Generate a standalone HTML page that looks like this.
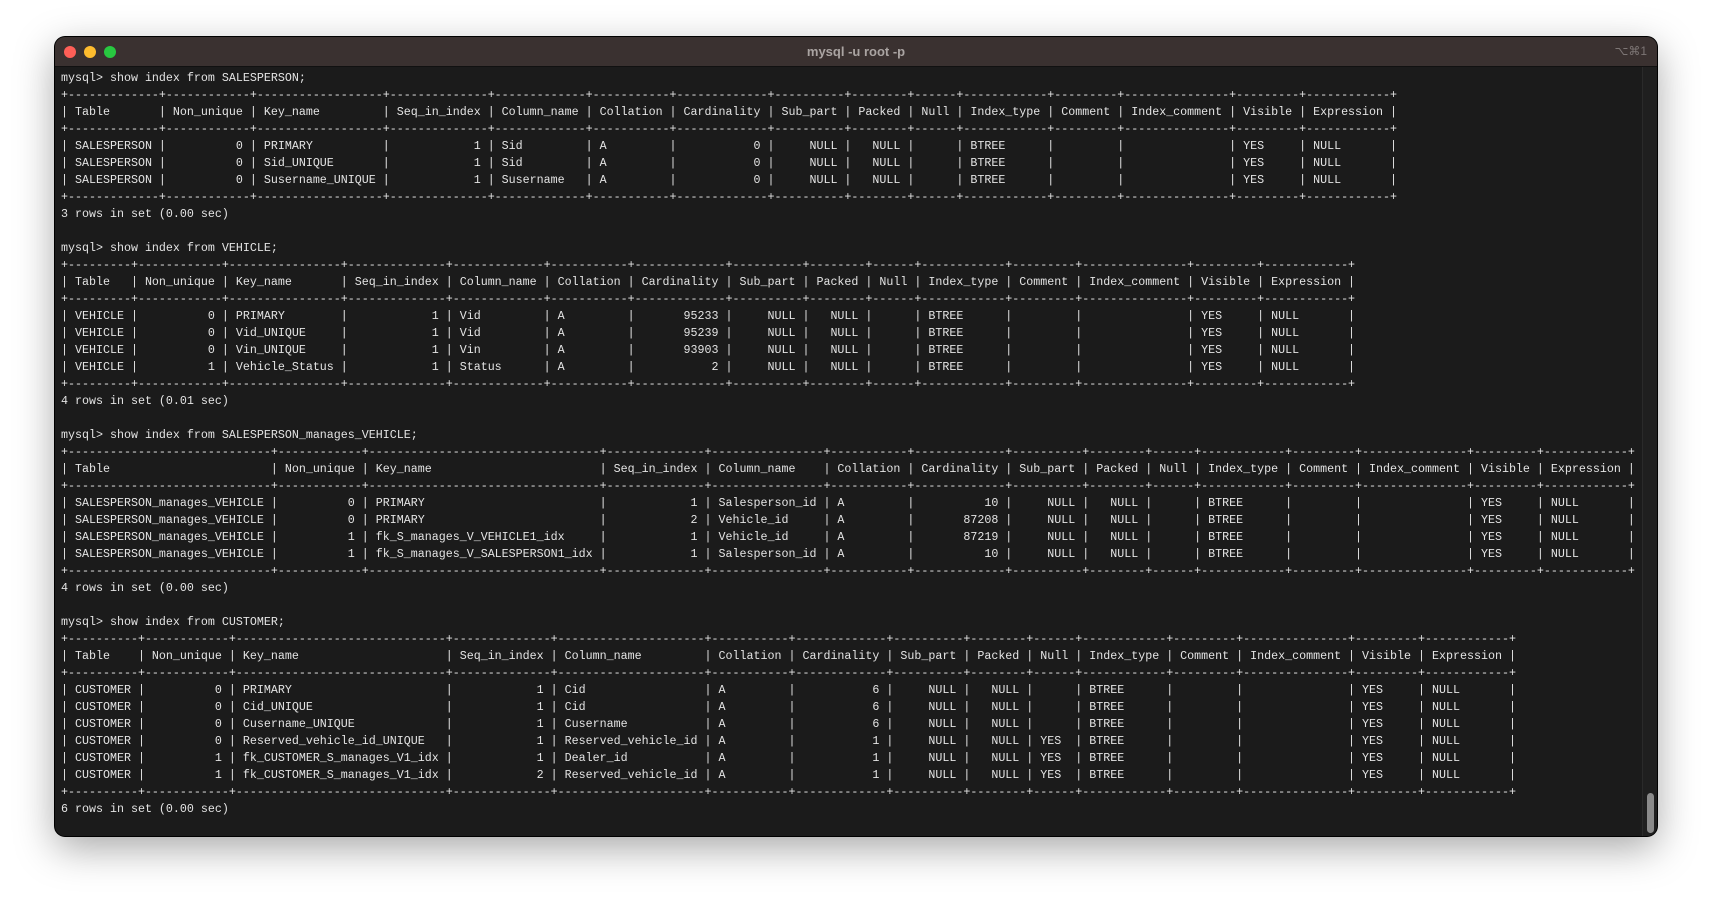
<!DOCTYPE html>
<html><head><meta charset="utf-8">
<style>
html,body{margin:0;padding:0;width:1712px;height:910px;background:#fff;overflow:hidden}
.win{position:absolute;left:55px;top:37px;width:1602px;height:799px;border-radius:10px;background:#1b1b1b;box-shadow:0 12px 40px rgba(0,0,0,.35),0 0 0 1px #000;overflow:hidden}
.tb{height:29px;background:#3a3130;position:relative;border-bottom:1px solid #111}
.dot{position:absolute;top:9px;width:12px;height:12px;border-radius:50%}
.title{position:absolute;left:0;right:0;top:7px;text-align:center;font:bold 13px "Liberation Sans",sans-serif;color:#aaa4a2}
.kb{position:absolute;right:10px;top:7px;font:12px "Liberation Sans","DejaVu Sans",sans-serif;color:#7d7675}
pre{margin:0;position:absolute;left:6px;top:33px;font:11.67px/17px "Liberation Mono",monospace;color:#e4e4e4;white-space:pre}
.sb{position:absolute;right:3px;top:756px;width:7px;height:40px;border-radius:4px;background:#8a8a8a}
.sbt{position:absolute;right:0;top:30px;width:14px;bottom:0;background:#1f1f1f;border-left:1px solid #2a2a2a}
</style></head><body>
<div class="win">
<div class="tb">
<div class="dot" style="left:9px;background:#fe5f57"></div>
<div class="dot" style="left:29px;background:#febc2e"></div>
<div class="dot" style="left:49px;background:#28c840"></div>
<div class="title">mysql -u root -p</div>
<div class="kb">⌥⌘1</div>
</div>
<div class="sbt"></div><div class="sb"></div>
<pre>mysql&gt; show index from SALESPERSON;
+-------------+------------+------------------+--------------+-------------+-----------+-------------+----------+--------+------+------------+---------+---------------+---------+------------+
| Table       | Non_unique | Key_name         | Seq_in_index | Column_name | Collation | Cardinality | Sub_part | Packed | Null | Index_type | Comment | Index_comment | Visible | Expression |
+-------------+------------+------------------+--------------+-------------+-----------+-------------+----------+--------+------+------------+---------+---------------+---------+------------+
| SALESPERSON |          0 | PRIMARY          |            1 | Sid         | A         |           0 |     NULL |   NULL |      | BTREE      |         |               | YES     | NULL       |
| SALESPERSON |          0 | Sid_UNIQUE       |            1 | Sid         | A         |           0 |     NULL |   NULL |      | BTREE      |         |               | YES     | NULL       |
| SALESPERSON |          0 | Susername_UNIQUE |            1 | Susername   | A         |           0 |     NULL |   NULL |      | BTREE      |         |               | YES     | NULL       |
+-------------+------------+------------------+--------------+-------------+-----------+-------------+----------+--------+------+------------+---------+---------------+---------+------------+
3 rows in set (0.00 sec)

mysql&gt; show index from VEHICLE;
+---------+------------+----------------+--------------+-------------+-----------+-------------+----------+--------+------+------------+---------+---------------+---------+------------+
| Table   | Non_unique | Key_name       | Seq_in_index | Column_name | Collation | Cardinality | Sub_part | Packed | Null | Index_type | Comment | Index_comment | Visible | Expression |
+---------+------------+----------------+--------------+-------------+-----------+-------------+----------+--------+------+------------+---------+---------------+---------+------------+
| VEHICLE |          0 | PRIMARY        |            1 | Vid         | A         |       95233 |     NULL |   NULL |      | BTREE      |         |               | YES     | NULL       |
| VEHICLE |          0 | Vid_UNIQUE     |            1 | Vid         | A         |       95239 |     NULL |   NULL |      | BTREE      |         |               | YES     | NULL       |
| VEHICLE |          0 | Vin_UNIQUE     |            1 | Vin         | A         |       93903 |     NULL |   NULL |      | BTREE      |         |               | YES     | NULL       |
| VEHICLE |          1 | Vehicle_Status |            1 | Status      | A         |           2 |     NULL |   NULL |      | BTREE      |         |               | YES     | NULL       |
+---------+------------+----------------+--------------+-------------+-----------+-------------+----------+--------+------+------------+---------+---------------+---------+------------+
4 rows in set (0.01 sec)

mysql&gt; show index from SALESPERSON_manages_VEHICLE;
+-----------------------------+------------+---------------------------------+--------------+----------------+-----------+-------------+----------+--------+------+------------+---------+---------------+---------+------------+
| Table                       | Non_unique | Key_name                        | Seq_in_index | Column_name    | Collation | Cardinality | Sub_part | Packed | Null | Index_type | Comment | Index_comment | Visible | Expression |
+-----------------------------+------------+---------------------------------+--------------+----------------+-----------+-------------+----------+--------+------+------------+---------+---------------+---------+------------+
| SALESPERSON_manages_VEHICLE |          0 | PRIMARY                         |            1 | Salesperson_id | A         |          10 |     NULL |   NULL |      | BTREE      |         |               | YES     | NULL       |
| SALESPERSON_manages_VEHICLE |          0 | PRIMARY                         |            2 | Vehicle_id     | A         |       87208 |     NULL |   NULL |      | BTREE      |         |               | YES     | NULL       |
| SALESPERSON_manages_VEHICLE |          1 | fk_S_manages_V_VEHICLE1_idx     |            1 | Vehicle_id     | A         |       87219 |     NULL |   NULL |      | BTREE      |         |               | YES     | NULL       |
| SALESPERSON_manages_VEHICLE |          1 | fk_S_manages_V_SALESPERSON1_idx |            1 | Salesperson_id | A         |          10 |     NULL |   NULL |      | BTREE      |         |               | YES     | NULL       |
+-----------------------------+------------+---------------------------------+--------------+----------------+-----------+-------------+----------+--------+------+------------+---------+---------------+---------+------------+
4 rows in set (0.00 sec)

mysql&gt; show index from CUSTOMER;
+----------+------------+------------------------------+--------------+---------------------+-----------+-------------+----------+--------+------+------------+---------+---------------+---------+------------+
| Table    | Non_unique | Key_name                     | Seq_in_index | Column_name         | Collation | Cardinality | Sub_part | Packed | Null | Index_type | Comment | Index_comment | Visible | Expression |
+----------+------------+------------------------------+--------------+---------------------+-----------+-------------+----------+--------+------+------------+---------+---------------+---------+------------+
| CUSTOMER |          0 | PRIMARY                      |            1 | Cid                 | A         |           6 |     NULL |   NULL |      | BTREE      |         |               | YES     | NULL       |
| CUSTOMER |          0 | Cid_UNIQUE                   |            1 | Cid                 | A         |           6 |     NULL |   NULL |      | BTREE      |         |               | YES     | NULL       |
| CUSTOMER |          0 | Cusername_UNIQUE             |            1 | Cusername           | A         |           6 |     NULL |   NULL |      | BTREE      |         |               | YES     | NULL       |
| CUSTOMER |          0 | Reserved_vehicle_id_UNIQUE   |            1 | Reserved_vehicle_id | A         |           1 |     NULL |   NULL | YES  | BTREE      |         |               | YES     | NULL       |
| CUSTOMER |          1 | fk_CUSTOMER_S_manages_V1_idx |            1 | Dealer_id           | A         |           1 |     NULL |   NULL | YES  | BTREE      |         |               | YES     | NULL       |
| CUSTOMER |          1 | fk_CUSTOMER_S_manages_V1_idx |            2 | Reserved_vehicle_id | A         |           1 |     NULL |   NULL | YES  | BTREE      |         |               | YES     | NULL       |
+----------+------------+------------------------------+--------------+---------------------+-----------+-------------+----------+--------+------+------------+---------+---------------+---------+------------+
6 rows in set (0.00 sec)</pre>
</div>
</body></html>
